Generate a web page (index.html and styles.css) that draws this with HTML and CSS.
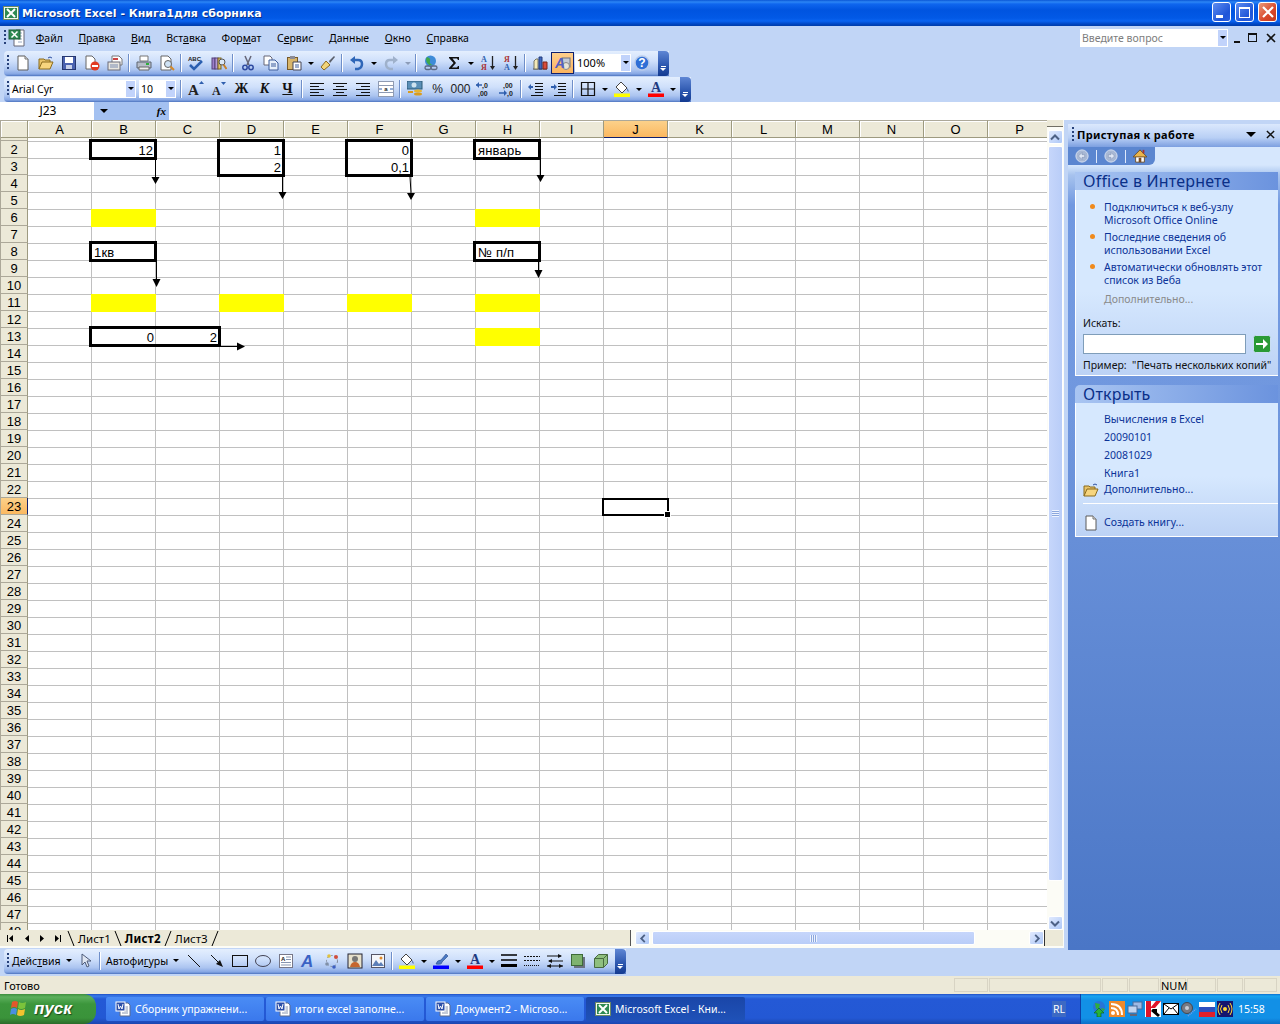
FILE: index.html
```html
<!DOCTYPE html>
<html lang="ru">
<head>
    <meta charset="UTF-8">
    <title>Microsoft Excel - Книга1для сборника</title>
    <link rel="stylesheet" href="styles.css">
</head>
<body>
    <svg class="defs" width="0" height="0">
        <symbol id="i-new" viewBox="0 0 16 16"><path d="M3 1h7l3 3v11H3z" fill="#fff" stroke="#5a5a5a"/><path d="M10 1v3h3" fill="#ddd" stroke="#777"/></symbol>
        <symbol id="i-open" viewBox="0 0 16 16"><path d="M1 14V4h5l1 1h5v2" fill="#e9c46a" stroke="#8a6a1c"/><path d="M1 14l3-7h11l-3 7z" fill="#f7d57e" stroke="#8a6a1c"/><path d="M10 3q2-2 4 0" fill="none" stroke="#2b4fa0"/></symbol>
        <symbol id="i-save" viewBox="0 0 16 16"><rect x="1.500" y="1.500" width="13" height="13" fill="#4a62b0" stroke="#26376f"/><rect x="4" y="2" width="8" height="6" fill="#fff"/><rect x="5" y="10" width="6" height="4" fill="#c9d2ea"/></symbol>
        <symbol id="i-perm" viewBox="0 0 16 16"><path d="M2 1h6l3 3v10H2z" fill="#fff" stroke="#666"/><circle cx="11" cy="11" r="4.500" fill="#e23a22"/><rect x="8" y="10" width="6" height="2" fill="#fff"/></symbol>
        <symbol id="i-mail" viewBox="0 0 16 16"><path d="M5 1h7l3 3v6H5z" fill="#fff" stroke="#777"/><rect x="1" y="7" width="12" height="8" fill="#e8e6e0" stroke="#6b6b78"/><path d="M3 10h8M3 12h8" stroke="#7a8bb0"/><rect x="6" y="3" width="5" height="2" fill="#c44"/></symbol>
        <symbol id="i-print" viewBox="0 0 16 16"><path d="M4 1h8v5H4z" fill="#fff" stroke="#777"/><path d="M1 7h14v6H1z" fill="#b7bdc9" stroke="#5d6470"/><path d="M3 12h10v3H3z" fill="#eee" stroke="#666"/><rect x="10" y="8" width="3" height="2" fill="#2fae3c"/></symbol>
        <symbol id="i-preview" viewBox="0 0 16 16"><path d="M2 1h7l3 3v11H2z" fill="#fff" stroke="#666"/><circle cx="9" cy="9" r="3.500" fill="#cfe2f5" stroke="#666"/><path d="M11.500 11.500l3.500 3.500" stroke="#d58a2a" stroke-width="2"/></symbol>
        <symbol id="i-research" viewBox="0 0 16 16"><rect x="1" y="3" width="3" height="11" fill="#9c7fc9" stroke="#54407a"/><rect x="4" y="3" width="3" height="11" fill="#b49ad8" stroke="#54407a"/><rect x="7" y="3" width="3" height="11" fill="#e0c36a" stroke="#7a6420"/><circle cx="11" cy="7" r="3" fill="#dbe8f6" stroke="#555"/><path d="M12.500 9.500l3 4.500" stroke="#c98228" stroke-width="2"/></symbol>
        <symbol id="i-cut" viewBox="0 0 16 16"><path d="M5 1l4 9M11 1l-4 9" stroke="#667" stroke-width="1.500"/><circle cx="5" cy="12.500" r="2.200" fill="none" stroke="#2e4aa0" stroke-width="1.500"/><circle cx="11" cy="12.500" r="2.200" fill="none" stroke="#2e4aa0" stroke-width="1.500"/></symbol>
        <symbol id="i-copy" viewBox="0 0 16 16"><path d="M1 1h6l2 2v7H1z" fill="#fff" stroke="#667"/><path d="M6 5h6l3 3v7H6z" fill="#e7f0fb" stroke="#3c5c9c"/><path d="M8 9h5M8 11h5" stroke="#3c5c9c"/></symbol>
        <symbol id="i-paste" viewBox="0 0 16 16"><rect x="1.500" y="2.500" width="10" height="12" fill="#d8b56a" stroke="#76592a"/><rect x="4" y="1" width="5" height="3" fill="#8b8b96"/><path d="M7 7h8v8H7z" fill="#fff" stroke="#445"/><path d="M9 10h4M9 12h4" stroke="#3c5c9c"/></symbol>
        <symbol id="i-brush" viewBox="0 0 16 16"><path d="M1 12l5-6 4 4-6 5z" fill="#f1d47a" stroke="#8b6a22"/><path d="M9 6l5-5 1 1-5 6z" fill="#5a5f6a"/></symbol>
        <symbol id="i-undo" viewBox="0 0 16 16"><path d="M4 5h5q4 0 4 4t-4 5H6" fill="none" stroke="#2e66b8" stroke-width="2.500"/><path d="M6 1v8L1 5z" fill="#2e66b8"/></symbol>
        <symbol id="i-redo" viewBox="0 0 16 16"><path d="M12 5H7q-4 0-4 4t4 5h3" fill="none" stroke="#9fb1cb" stroke-width="2.500"/><path d="M10 1v8l5-4z" fill="#9fb1cb"/></symbol>
        <symbol id="i-link" viewBox="0 0 16 16"><circle cx="7.500" cy="6" r="5.500" fill="#3d8bd8"/><path d="M4 2q4 1 3 4t3 4q-3 1-5-1T3 4z" fill="#3fa84a"/><rect x="2" y="11" width="6" height="3.500" rx="1.700" fill="none" stroke="#5b6a86" stroke-width="1.300"/><rect x="8" y="11" width="6" height="3.500" rx="1.700" fill="none" stroke="#5b6a86" stroke-width="1.300"/></symbol>
        <symbol id="i-sigma" viewBox="0 0 16 16"><path d="M3 2h10v3h-1l-1-1.500H6.500L10 8l-4 4.500h5L12 11h1v3H3v-1l4.500-5L3 3z" fill="#111"/></symbol>
        <symbol id="i-chart" viewBox="0 0 16 16"><path d="M1 14h14" stroke="#444"/><path d="M2 6l2-2h2v10H2z" fill="#f4e9b8" stroke="#776"/><path d="M7 2h3v12H7z" fill="#3f68c0" stroke="#223a78"/><path d="M11 7h4v7h-4z" fill="#d84b3a" stroke="#7a2418"/></symbol>
        <symbol id="i-left" viewBox="0 0 16 16"><path d="M1 2.500h14M1 5.500h9M1 8.500h14M1 11.500h9M1 14.500h14" stroke="#111"/></symbol>
        <symbol id="i-center" viewBox="0 0 16 16"><path d="M1 2.500h14M4 5.500h8M1 8.500h14M4 11.500h8M1 14.500h14" stroke="#111"/></symbol>
        <symbol id="i-right" viewBox="0 0 16 16"><path d="M1 2.500h14M6 5.500h9M1 8.500h14M6 11.500h9M1 14.500h14" stroke="#111"/></symbol>
        <symbol id="i-money" viewBox="0 0 16 16"><rect x="0" y="0" width="15" height="8" fill="#5a8fb8" stroke="#2c5a78"/><circle cx="7" cy="4" r="2.500" fill="#cfe2ef"/><ellipse cx="11" cy="10" rx="4" ry="1.500" fill="#e9b530"/><ellipse cx="11" cy="13" rx="4" ry="1.500" fill="#d89c20"/><path d="M1 11h5" stroke="#d89c20" stroke-width="2"/></symbol>
        <symbol id="i-outdent" viewBox="0 0 16 16"><path d="M7 2.500h8M7 5.500h8M7 8.500h8M7 11.500h8M3 14.500h12" stroke="#111"/><path d="M5 6H2" stroke="#2f5fae" stroke-width="2"/><path d="M3 3L0 6l3 3z" fill="#2f5fae"/></symbol>
        <symbol id="i-indent" viewBox="0 0 16 16"><path d="M7 2.500h8M7 5.500h8M7 8.500h8M7 11.500h8M3 14.500h12" stroke="#111"/><path d="M0 6h3" stroke="#2f5fae" stroke-width="2"/><path d="M3 3l3 3-3 3z" fill="#2f5fae"/></symbol>
        <symbol id="i-borders" viewBox="0 0 16 16"><path d="M1.500 1.500h13v13h-13zM8 1.500v13M1.500 8h13" fill="none" stroke="#111" stroke-width="1.200"/></symbol>
        <symbol id="i-fill" viewBox="0 0 16 16"><path d="M2 6l5-5 6 6-5 5z" fill="#fff" stroke="#444"/><path d="M13 7q2 2 1.500 4-1.500-1-1.500-4z" fill="#3c5c9c"/><rect x="0" y="12.500" width="16" height="3.500" fill="#ff0"/></symbol>
        <symbol id="i-pen" viewBox="0 0 16 16"><path d="M3 11q1-4 5-4l5-6 2 2-6 6q0 3-6 2z" fill="#4a79c4" stroke="#2a4a88" stroke-width=".6"/><rect x="0" y="12.500" width="16" height="3.500" fill="#00f"/></symbol>
        <symbol id="i-cursor" viewBox="0 0 16 16"><path d="M4 1v11l3-3 2 5 2-1-2-5h4z" fill="#dfe6f2" stroke="#4d5b78"/></symbol>
        <symbol id="i-line" viewBox="0 0 16 16"><path d="M2 2l12 12" stroke="#111"/></symbol>
        <symbol id="i-arrow" viewBox="0 0 16 16"><path d="M2 2l8 8" stroke="#111"/><path d="M7 11l4-4 3 7z" fill="#111"/></symbol>
        <symbol id="i-rect" viewBox="0 0 16 16"><rect x=".5" y="2.500" width="15" height="11" fill="none" stroke="#111"/></symbol>
        <symbol id="i-oval" viewBox="0 0 16 16"><ellipse cx="8" cy="8" rx="7.500" ry="5.500" fill="none" stroke="#445"/></symbol>
        <symbol id="i-diagram" viewBox="0 0 16 16"><circle cx="8" cy="8" r="5.500" fill="none" stroke="#7f8796" stroke-dasharray="2 2"/><circle cx="12" cy="4" r="2" fill="#d14d3a"/><circle cx="5" cy="3" r="1.800" fill="#e0c13e"/><circle cx="3" cy="11" r="1.800" fill="#8090a8"/><circle cx="10" cy="14" r="1.800" fill="#3d5fc0"/></symbol>
        <symbol id="i-clip" viewBox="0 0 16 16"><rect x="1" y="1" width="14" height="14" fill="#e7e1cc" stroke="#223"/><circle cx="8" cy="6" r="3" fill="#777"/><path d="M3 14q1-5 5-5t5 5z" fill="#c5662e"/></symbol>
        <symbol id="i-pic" viewBox="0 0 16 16"><rect x="1.500" y="1.500" width="13" height="13" fill="#f4f6fa" stroke="#556"/><path d="M2 13l4-6 3 4 2-2 3 4z" fill="#5d7fb8"/><circle cx="11" cy="5" r="1.500" fill="#e08a2a"/></symbol>
        <symbol id="i-lstyle" viewBox="0 0 16 16"><path d="M0 2h16M0 7h16" stroke="#000" stroke-width="1.500"/><path d="M0 12.500h16" stroke="#000" stroke-width="3"/></symbol>
        <symbol id="i-dash" viewBox="0 0 16 16"><path d="M0 3.500h16M0 7.500h16" stroke="#111" stroke-dasharray="2 1"/><path d="M0 12.500h16" stroke="#111" stroke-dasharray="1 1"/></symbol>
        <symbol id="i-arrows" viewBox="0 0 16 16"><path d="M0 3h14M2 8h14M0 13h16" stroke="#111"/><path d="M11 1l4 2-4 2zM5 6L1 8l4 2zM4 11l-4 2 4 2zM12 11l4 2-4 2z" fill="#111"/></symbol>
        <symbol id="i-shadow" viewBox="0 0 16 16"><rect x="4" y="4" width="11" height="11" fill="#6b7280"/><rect x="1.500" y="1.500" width="11" height="11" fill="#7fb36f" stroke="#3e6a38"/></symbol>
        <symbol id="i-cube" viewBox="0 0 16 16"><path d="M1.500 5.500l4-4h9v9l-4 4h-9z" fill="#8fbf7f" stroke="#486b40"/><path d="M1.500 5.500h9v9M10.500 5.500l4-4" fill="none" stroke="#486b40"/></symbol>
        <symbol id="i-xl" viewBox="0 0 16 16"><rect x=".5" y="1.500" width="15" height="13" fill="#f4f7ee" stroke="#6d8a66"/><rect x="2" y="3" width="12" height="10" fill="#2e8a52"/><path d="M4 4l8 8M12 4l-8 8" stroke="#fff" stroke-width="2"/></symbol>
        <symbol id="i-xldoc" viewBox="0 0 18 18"><path d="M8 1h8v16H6V8" fill="#fff" stroke="#667"/><path d="M10 4h4M10 7h4M10 10h4M10 13h4" stroke="#9aa9c2"/><rect x="1" y="1" width="11" height="9" fill="#2e8a52" stroke="#1d5c36"/><path d="M3.500 2.500l6 6M9.500 2.500l-6 6" stroke="#fff" stroke-width="1.500"/></symbol>
        <symbol id="i-word" viewBox="0 0 16 16"><path d="M5 2h8l2 2v11H5z" fill="#fff" stroke="#5d6b8c"/><path d="M9 6h4M9 8h4M9 10h4M7 12h6" stroke="#8795b0"/><rect x="1" y="1" width="9" height="9" fill="#2c4fa8" stroke="#fff"/><path d="M3 3l1 5 1.500-3L7 8l1-5" fill="none" stroke="#fff"/></symbol>
        <symbol id="i-back" viewBox="0 0 16 16"><circle cx="8" cy="8" r="7" fill="#a8b8d4" stroke="#dfe7f5"/><path d="M11 6.500H8V4L4 8l4 4V9.500h3z" fill="#dfe7f5" stroke="#7c8db0" stroke-width=".6"/></symbol>
        <symbol id="i-forward" viewBox="0 0 16 16"><circle cx="8" cy="8" r="7" fill="#a8b8d4" stroke="#dfe7f5"/><path d="M5 6.500h3V4l4 4-4 4V9.500H5z" fill="#dfe7f5" stroke="#7c8db0" stroke-width=".6"/></symbol>
        <symbol id="i-home" viewBox="0 0 16 16"><path d="M3 8v7h10V8z" fill="#fff" stroke="#6b4a20"/><path d="M0 9l8-8 8 8z" fill="#e9b44c" stroke="#6b4a20"/><rect x="6.500" y="10" width="3" height="5" fill="#7a4a20"/><rect x="11" y="1" width="2" height="4" fill="#a33"/></symbol>
        <symbol id="i-go" viewBox="0 0 18 18"><rect x=".5" y=".5" width="17" height="17" rx="2" fill="#2a9a35" stroke="#c9ddf2"/><path d="M3 8h7V4l5 5-5 5v-4H3z" fill="#fff"/></symbol>
        <symbol id="t-globe" viewBox="0 0 16 16"><circle cx="8" cy="6" r="6" fill="#2874d8"/><path d="M4 2l5 1-1 4-3 1zM10 7l4 1-2 3z" fill="#2fae3c"/><path d="M8 7l5 5h-3v4H6v-4H3z" fill="#27b33a" stroke="#0a5c17" stroke-width=".6"/></symbol>
        <symbol id="t-rss" viewBox="0 0 16 16"><rect width="16" height="16" fill="#ee8a2c"/><circle cx="4" cy="12" r="2" fill="#fff"/><path d="M2 7q7 0 7 7M2 3q11 0 11 11" fill="none" stroke="#fff" stroke-width="2"/></symbol>
        <symbol id="t-net" viewBox="0 0 16 16"><rect x="6" y="1" width="9" height="7" fill="#9db9e4" stroke="#4a6a9a"/><rect x="1" y="5" width="9" height="7" fill="#c2d4ef" stroke="#4a6a9a"/><path d="M3 14h7" stroke="#667" stroke-width="2"/></symbol>
        <symbol id="t-kav" viewBox="0 0 16 16"><rect width="16" height="16" fill="#fff"/><path d="M1 0h5v6l5-6h5L10 7H6v9H1z" fill="#e0152a"/><path d="M8 8l7 6-2 2-7-6z" fill="#000"/><path d="M7 8h5v5z" fill="#000"/></symbol>
        <symbol id="t-mail" viewBox="0 0 16 16"><rect x=".5" y="2.500" width="15" height="11" fill="#fff" stroke="#000"/><path d="M1 3l7 5 7-5M1 13l5-6M15 13l-5-6" fill="none" stroke="#000"/></symbol>
        <symbol id="t-sound" viewBox="0 0 16 16"><circle cx="6" cy="7" r="5.500" fill="#767a84" stroke="#44474f"/><circle cx="6" cy="7" r="2" fill="#c8ccd4"/><path d="M7 15l8-7" stroke="#7d9be0" stroke-dasharray="1 1" stroke-width="1.500"/></symbol>
        <symbol id="t-flag" viewBox="0 0 16 16"><rect y="1" width="16" height="5" fill="#fff"/><rect y="6" width="16" height="5" fill="#2c4fbf"/><rect y="11" width="16" height="5" fill="#e0202a"/></symbol>
        <symbol id="t-wave" viewBox="0 0 16 16"><rect width="16" height="16" fill="#14146e"/><circle cx="8" cy="8" r="2" fill="#ffd93a"/><path d="M5 4q-3 4 0 8M11 4q3 4 0 8M3 2q-4 6 0 12M13 2q4 6 0 12" fill="none" stroke="#ffd93a"/></symbol>
        <symbol id="i-winlogo" viewBox="0 0 20 20"><path d="M3 3q3-2 6 0l-1 6q-3-2-6 0z" fill="#e2572c"/><path d="M10 3q3 2 7 0l-1 6q-4 2-7 0z" fill="#7bc33b"/><path d="M2 10q3-2 6 0l-1 6q-3-2-6 0z" fill="#4a8fe0"/><path d="M9 10q3 2 7 0l-1 6q-4 2-7 0z" fill="#f1c22f"/></symbol>
    </svg>

    <div class="window">
        <header class="titlebar">
            <svg class="title-icon"><use href="#i-xl"/></svg>
            <span class="title-text">Microsoft Excel - Книга1для сборника</span>
            <div class="title-buttons">
                <span class="win-btn"><i class="glyph-min"></i></span>
                <span class="win-btn"><i class="glyph-restore"></i></span>
                <span class="win-btn win-close"><svg class="glyph-close" viewBox="0 0 12 12"><path d="M1 1l10 10M11 1L1 11" stroke="#fff" stroke-width="2.200"/></svg></span>
            </div>
        </header>

        <nav class="menubar">
            <i class="grip grip-menu"></i>
            <svg class="doc-icon"><use href="#i-xldoc"/></svg>
            <span class="menu-item"><u>Ф</u>айл</span>
            <span class="menu-item"><u>П</u>равка</span>
            <span class="menu-item"><u>В</u>ид</span>
            <span class="menu-item">Вст<u>а</u>вка</span>
            <span class="menu-item">Фор<u>м</u>ат</span>
            <span class="menu-item">С<u>е</u>рвис</span>
            <span class="menu-item"><u>Д</u>анные</span>
            <span class="menu-item"><u>О</u>кно</span>
            <span class="menu-item"><u>С</u>правка</span>
            <div class="menu-right">
                <div class="combo help-combo"><span class="combo-text">Введите вопрос</span><span class="combo-arrow"></span></div>
                <i class="glyph-min dark"></i>
                <i class="glyph-restore dark"></i>
                <svg class="glyph-close-doc" viewBox="0 0 10 10"><path d="M1 1l8 8M9 1L1 9" stroke="#111" stroke-width="1.600"/></svg>
            </div>
        </nav>

        <div class="dock-row">
            <div class="toolbar toolbar-std">
                <i class="grip"></i>
                <span class="btn"><svg><use href="#i-new"/></svg></span>
                <span class="btn"><svg><use href="#i-open"/></svg></span>
                <span class="btn"><svg><use href="#i-save"/></svg></span>
                <span class="btn"><svg><use href="#i-perm"/></svg></span>
                <span class="btn"><svg><use href="#i-mail"/></svg></span>
                <i class="sep"></i>
                <span class="btn"><svg><use href="#i-print"/></svg></span>
                <span class="btn"><svg><use href="#i-preview"/></svg></span>
                <i class="sep"></i>
                <span class="btn"><svg viewBox="0 0 16 16"><text x="0" y="6" class="tiny-b">ABC</text><path d="M2 10l4 4 8-8" fill="none" stroke="#2b5fb0" stroke-width="2.500"/></svg></span>
                <span class="btn"><svg><use href="#i-research"/></svg></span>
                <i class="sep"></i>
                <span class="btn"><svg><use href="#i-cut"/></svg></span>
                <span class="btn"><svg><use href="#i-copy"/></svg></span>
                <span class="btn"><svg><use href="#i-paste"/></svg></span>
                <i class="drop"></i>
                <span class="btn"><svg><use href="#i-brush"/></svg></span>
                <i class="sep"></i>
                <span class="btn"><svg><use href="#i-undo"/></svg></span>
                <i class="drop"></i>
                <span class="btn"><svg><use href="#i-redo"/></svg></span>
                <i class="drop off"></i>
                <i class="sep"></i>
                <span class="btn"><svg><use href="#i-link"/></svg></span>
                <span class="btn"><svg><use href="#i-sigma"/></svg></span>
                <i class="drop"></i>
                <span class="btn"><svg viewBox="0 0 16 16"><text x="1" y="7" class="tiny-a">A</text><text x="1" y="15" class="tiny-z">Я</text><path d="M12.500 1v12" stroke="#222" stroke-width="1.300"/><path d="M10 11h5l-2.500 4z" fill="#222"/></svg></span>
                <span class="btn"><svg viewBox="0 0 16 16"><text x="1" y="7" class="tiny-z">Я</text><text x="1" y="15" class="tiny-a">A</text><path d="M12.500 1v12" stroke="#222" stroke-width="1.300"/><path d="M10 11h5l-2.500 4z" fill="#222"/></svg></span>
                <i class="sep"></i>
                <span class="btn"><svg><use href="#i-chart"/></svg></span>
                <span class="btn active"><svg viewBox="0 0 16 16"><rect x="7" y="3" width="8" height="9" fill="#c6cbd6" stroke="#6a7080"/><circle cx="11" cy="11" r="3.500" fill="#e8e4d8" stroke="#888"/><text x="0" y="13" class="tiny-draw">A</text></svg></span>
                <div class="combo zoom-combo"><span class="combo-text">100%</span><span class="combo-arrow"></span></div>
                <span class="btn"><svg viewBox="0 0 16 16"><circle cx="8" cy="8" r="7" fill="#2f6fd6" stroke="#b9cbea" stroke-width="1.500"/><text x="8" y="12" text-anchor="middle" class="tiny-help">?</text></svg></span>
                <span class="handle"></span>
            </div>
        </div>

        <div class="dock-row">
            <div class="toolbar toolbar-fmt">
                <i class="grip"></i>
                <div class="combo font-combo"><span class="combo-text">Arial Cyr</span><span class="combo-arrow"></span></div>
                <div class="combo size-combo"><span class="combo-text">10</span><span class="combo-arrow"></span></div>
                <i class="sep"></i>
                <span class="btn"><svg viewBox="0 0 16 16"><text x="0" y="14" class="serif-lg">A</text><path d="M11 3l2.500-3L16 3z" fill="#2f5fae"/></svg></span>
                <span class="btn"><svg viewBox="0 0 16 16"><text x="1" y="14" class="serif-sm">A</text><path d="M10 1l2.500 3L15 1z" fill="#2f5fae"/></svg></span>
                <span class="btn fmt-letter">Ж</span>
                <span class="btn fmt-letter fmt-italic">К</span>
                <span class="btn fmt-letter fmt-under">Ч</span>
                <i class="sep"></i>
                <span class="btn"><svg><use href="#i-left"/></svg></span>
                <span class="btn"><svg><use href="#i-center"/></svg></span>
                <span class="btn"><svg><use href="#i-right"/></svg></span>
                <span class="btn"><svg viewBox="0 0 16 16"><rect x=".5" y=".5" width="15" height="15" fill="#fff" stroke="#8f9bb3"/><path d="M0 4.500h16M0 11.500h16" stroke="#8f9bb3"/><text x="8" y="10" text-anchor="middle" class="tiny-b">a</text><path d="M1 8h3M12 8h3" stroke="#2b5fb0"/></svg></span>
                <i class="sep"></i>
                <span class="btn"><svg><use href="#i-money"/></svg></span>
                <span class="btn fmt-plain">%</span>
                <span class="btn fmt-plain">000</span>
                <span class="btn"><svg viewBox="0 0 16 16"><text x="6" y="7" class="tiny-num">,0</text><text x="2" y="15" class="tiny-num">,00</text><path d="M0 4h6" stroke="#2f5fae" stroke-width="1.500"/><path d="M3 1L0 4l3 3z" fill="#2f5fae"/></svg></span>
                <span class="btn"><svg viewBox="0 0 16 16"><text x="4" y="7" class="tiny-num">,00</text><text x="8" y="15" class="tiny-num">,0</text><path d="M0 12h6" stroke="#2f5fae" stroke-width="1.500"/><path d="M5 9l3 3-3 3z" fill="#2f5fae"/></svg></span>
                <i class="sep"></i>
                <span class="btn"><svg><use href="#i-outdent"/></svg></span>
                <span class="btn"><svg><use href="#i-indent"/></svg></span>
                <i class="sep"></i>
                <span class="btn"><svg><use href="#i-borders"/></svg></span>
                <i class="drop"></i>
                <span class="btn"><svg><use href="#i-fill"/></svg></span>
                <i class="drop"></i>
                <span class="btn"><svg viewBox="0 0 16 16"><text x="8" y="11" text-anchor="middle" class="serif-color">A</text><rect x="0" y="12.500" width="16" height="3.500" fill="#f00"/></svg></span>
                <i class="drop"></i>
                <span class="handle handle-fmt"></span>
            </div>
        </div>

        <div class="formula-bar">
            <span class="name-box">J23</span>
            <span class="name-arrow"><i class="tri"></i><em class="fx">fx</em></span>
        </div>

        <div class="work">
            <section class="sheet-wrap">
                <div class="sheet-top">
                    <div class="grid">
                        <div class="col-head corner"></div>
                        <div class="col-head">A</div><div class="col-head">B</div><div class="col-head">C</div><div class="col-head">D</div>
                        <div class="col-head">E</div><div class="col-head">F</div><div class="col-head">G</div><div class="col-head">H</div>
                        <div class="col-head">I</div><div class="col-head current">J</div><div class="col-head">K</div><div class="col-head">L</div>
                        <div class="col-head">M</div><div class="col-head">N</div><div class="col-head">O</div><div class="col-head">P</div>

                        <div class="row-head"></div>
                        <div class="row-head">2</div><div class="row-head">3</div><div class="row-head">4</div><div class="row-head">5</div>
                        <div class="row-head">6</div><div class="row-head">7</div><div class="row-head">8</div><div class="row-head">9</div>
                        <div class="row-head">10</div><div class="row-head">11</div><div class="row-head">12</div><div class="row-head">13</div>
                        <div class="row-head">14</div><div class="row-head">15</div><div class="row-head">16</div><div class="row-head">17</div>
                        <div class="row-head">18</div><div class="row-head">19</div><div class="row-head">20</div><div class="row-head">21</div>
                        <div class="row-head">22</div><div class="row-head current">23</div><div class="row-head">24</div><div class="row-head">25</div>
                        <div class="row-head">26</div><div class="row-head">27</div><div class="row-head">28</div><div class="row-head">29</div>
                        <div class="row-head">30</div><div class="row-head">31</div><div class="row-head">32</div><div class="row-head">33</div>
                        <div class="row-head">34</div><div class="row-head">35</div><div class="row-head">36</div><div class="row-head">37</div>
                        <div class="row-head">38</div><div class="row-head">39</div><div class="row-head">40</div><div class="row-head">41</div>
                        <div class="row-head">42</div><div class="row-head">43</div><div class="row-head">44</div><div class="row-head">45</div>
                        <div class="row-head">46</div><div class="row-head">47</div><div class="row-head">48</div>

                        <div class="yellow col-b row-6"></div>
                        <div class="yellow col-h row-6"></div>
                        <div class="yellow col-b row-11"></div>
                        <div class="yellow col-d row-11"></div>
                        <div class="yellow col-f row-11"></div>
                        <div class="yellow col-h row-11"></div>
                        <div class="yellow col-h row-13"></div>

                        <div class="box col-b row-2"><span class="val">12</span></div>
                        <div class="box col-d row-2-3"><span class="val">1</span><span class="val">2</span></div>
                        <div class="box col-f row-2-3"><span class="val">0</span><span class="val">0,1</span></div>
                        <div class="box col-h row-2"><span class="val txt">январь</span></div>
                        <div class="box col-b row-8"><span class="val txt">1кв</span></div>
                        <div class="box col-h row-8"><span class="val txt">№ п/п</span></div>
                        <div class="box col-b-c row-13"><span class="val half">0</span><span class="val half">2</span></div>

                        <div class="selected col-j row-23"></div>

                        <svg class="arrows" viewBox="0 120 1047 810" width="1047" height="810">
                            <path d="M155.500 160v17M282.500 177v15M410 177l1 16M540.500 160v15M156.500 262v17M538.500 262v9M221 346.500h17" stroke="#000" fill="none"/>
                            <path d="M151.500 177h8l-4 7zM278.500 192h8l-4 7zM407 193h8l-4 7zM536.500 175h8l-4 7zM152.500 279h8l-4 8zM534.500 270h8l-4 8zM237 342.500v8l8-4z" fill="#000"/>
                        </svg>
                    </div>

                    <div class="vscroll">
                        <div class="split-v"></div>
                        <span class="sbtn"><svg viewBox="0 0 10 8"><path d="M1 6l4-4 4 4" fill="none" stroke="#4d6185" stroke-width="2"/></svg></span>
                        <div class="vthumb"><i class="thumb-grip-v"></i></div>
                        <div class="vtrack"></div>
                        <span class="sbtn"><svg viewBox="0 0 10 8"><path d="M1 2l4 4 4-4" fill="none" stroke="#4d6185" stroke-width="2"/></svg></span>
                    </div>
                </div>

                <div class="sheet-bottom">
                    <div class="tab-nav">
                        <svg viewBox="0 0 66 15" width="66" height="15"><path d="M6 4h1v7H6zM12 4v7l-4-3.500zM28 4v7l-4-3.500zM39 4v7l4-3.500zM54 4v7l4-3.500zM59 4h1v7h-1z" fill="#000"/></svg>
                    </div>
                    <div class="tabs">
                        <svg class="slash" viewBox="0 0 8 15"><path d="M1 0l6 15" stroke="#000"/></svg>
                        <span class="tab">Лист1</span>
                        <svg class="slash" viewBox="0 0 8 15"><path d="M1 0l6 15" stroke="#000"/></svg>
                        <span class="tab tab-active">Лист2</span>
                        <svg class="slash" viewBox="0 0 8 15"><path d="M7 0L1 15" stroke="#000"/></svg>
                        <span class="tab">Лист3</span>
                        <svg class="slash" viewBox="0 0 8 15"><path d="M7 0L1 15" stroke="#000"/></svg>
                    </div>
                    <div class="hscroll">
                        <span class="sbtn"><svg viewBox="0 0 8 10"><path d="M6 1L2 5l4 4" fill="none" stroke="#4d6185" stroke-width="2"/></svg></span>
                        <div class="hthumb"><i class="thumb-grip-h"></i></div>
                        <div class="htrack"></div>
                        <span class="sbtn"><svg viewBox="0 0 8 10"><path d="M2 1l4 4-4 4" fill="none" stroke="#4d6185" stroke-width="2"/></svg></span>
                    </div>
                    <div class="corner-box"></div>
                </div>
            </section>

            <aside class="pane">
                <div class="pane-title">
                    <i class="grip grip-pane"></i>
                    <span class="pane-name">Приступая к работе</span>
                    <i class="tri tri-big"></i>
                    <svg class="pane-close" viewBox="0 0 10 10"><path d="M1 1l8 8M9 1L1 9" stroke="#111" stroke-width="1.600"/></svg>
                </div>
                <div class="pane-nav">
                    <div class="pane-nav-tools">
                        <svg><use href="#i-back"/></svg>
                        <i class="nav-sep"></i>
                        <svg><use href="#i-forward"/></svg>
                        <i class="nav-sep"></i>
                        <svg><use href="#i-home"/></svg>
                    </div>
                </div>
                <div class="pane-content">
                    <div class="sect-head">Office в Интернете</div>
                    <div class="sect-body sect-online">
                        <a class="bullet">Подключиться к веб-узлу<br>Microsoft Office Online</a>
                        <a class="bullet">Последние сведения об<br>использовании Excel</a>
                        <a class="bullet">Автоматически обновлять этот<br>список из Веба</a>
                        <a class="more">Дополнительно...</a>
                        <label class="search-label">Искать:</label>
                        <div class="search-row">
                            <span class="search-input"></span>
                            <svg class="go-btn"><use href="#i-go"/></svg>
                        </div>
                        <p class="example">Пример:&nbsp; "Печать нескольких копий"</p>
                    </div>

                    <div class="sect-head sect-open">Открыть</div>
                    <div class="sect-body sect-files">
                        <a class="file">Вычисления в Excel</a>
                        <a class="file">20090101</a>
                        <a class="file">20081029</a>
                        <a class="file file-last">Книга1</a>
                        <a class="file file-more"><svg class="file-icon"><use href="#i-open"/></svg>Дополнительно...</a>
                        <hr class="sect-rule">
                        <a class="file file-new"><svg class="file-icon"><use href="#i-new"/></svg>Создать книгу...</a>
                    </div>
                </div>
            </aside>
        </div>

        <div class="dock-row dock-draw">
            <div class="toolbar toolbar-draw">
                <i class="grip"></i>
                <span class="text-btn btn-actions"><span>Дейс<u>т</u>вия</span><i class="tri"></i></span>
                <span class="btn"><svg><use href="#i-cursor"/></svg></span>
                <i class="sep"></i>
                <span class="text-btn btn-shapes"><span>Автофи<u>г</u>уры</span><i class="tri"></i></span>
                <span class="btn"><svg><use href="#i-line"/></svg></span>
                <span class="btn"><svg><use href="#i-arrow"/></svg></span>
                <span class="btn"><svg><use href="#i-rect"/></svg></span>
                <span class="btn"><svg><use href="#i-oval"/></svg></span>
                <span class="btn"><svg viewBox="0 0 16 16"><rect x="1.500" y="1.500" width="13" height="13" fill="#fff" stroke="#778"/><text x="3" y="8" class="tiny-b">A</text><path d="M8 4h5M8 6.500h5M3 9.500h10M3 12h10" stroke="#8795b0"/></svg></span>
                <span class="btn"><svg viewBox="0 0 16 16"><text x="0" y="14" class="wordart">A</text></svg></span>
                <span class="btn"><svg><use href="#i-diagram"/></svg></span>
                <span class="btn"><svg><use href="#i-clip"/></svg></span>
                <span class="btn"><svg><use href="#i-pic"/></svg></span>
                <i class="sep"></i>
                <span class="btn"><svg><use href="#i-fill"/></svg></span>
                <i class="drop"></i>
                <span class="btn"><svg><use href="#i-pen"/></svg></span>
                <i class="drop"></i>
                <span class="btn"><svg viewBox="0 0 16 16"><text x="8" y="11" text-anchor="middle" class="serif-color">A</text><rect x="0" y="12.500" width="16" height="3.500" fill="#f00"/></svg></span>
                <i class="drop"></i>
                <span class="btn"><svg><use href="#i-lstyle"/></svg></span>
                <span class="btn"><svg><use href="#i-dash"/></svg></span>
                <span class="btn"><svg><use href="#i-arrows"/></svg></span>
                <span class="btn"><svg><use href="#i-shadow"/></svg></span>
                <span class="btn"><svg><use href="#i-cube"/></svg></span>
                <span class="handle"></span>
            </div>
        </div>

        <footer class="statusbar">
            <span class="status-text">Готово</span>
            <span class="panel p34"></span>
            <span class="panel p112"></span>
            <span class="panel p26"></span>
            <span class="panel p30"></span>
            <span class="panel p26">NUM</span>
            <span class="panel p29"></span>
            <span class="panel p26"></span>
            <span class="panel p33"></span>
        </footer>

        <div class="taskbar">
            <div class="start"><svg><use href="#i-winlogo"/></svg><span>пуск</span></div>
            <div class="task-list">
                <div class="task"><svg><use href="#i-word"/></svg><span>Сборник упражнени...</span></div>
                <div class="task"><svg><use href="#i-word"/></svg><span>итоги excel заполне...</span></div>
                <div class="task"><svg><use href="#i-word"/></svg><span>Документ2 - Microso...</span></div>
                <div class="task task-active"><svg><use href="#i-xl"/></svg><span>Microsoft Excel - Кни...</span></div>
            </div>
            <span class="lang">RL</span>
            <div class="tray">
                <svg><use href="#t-globe"/></svg>
                <svg><use href="#t-rss"/></svg>
                <svg><use href="#t-net"/></svg>
                <svg><use href="#t-kav"/></svg>
                <svg><use href="#t-mail"/></svg>
                <svg><use href="#t-sound"/></svg>
                <svg><use href="#t-flag"/></svg>
                <svg><use href="#t-wave"/></svg>
                <span class="clock">15:58</span>
            </div>
        </div>
    </div>
</body>
</html>
```

FILE: styles.css
```css
* {
    box-sizing: border-box;
}

html, body {
    margin: 0;
    padding: 0;
    width: 1280px;
    height: 1024px;
    overflow: hidden;
}

body {
    font-family: "Noto Sans", "DejaVu Sans", sans-serif;
    font-size: 10.500px;
    color: #000;
    background-color: #c1d5f6;
}

i, em {
    display: block;
    font-style: normal;
}

.defs {
    position: absolute;
}

.window {
    display: flex;
    flex-direction: column;
    height: 1024px;
}

/* svg text inside the icons */
.tiny-b { font: bold 6px "Liberation Sans", sans-serif; fill: #222; }
.tiny-a { font: bold 8px "Liberation Serif", serif; fill: #2f5fae; }
.tiny-z { font: bold 8px "Liberation Serif", serif; fill: #a33; }
.tiny-num { font: bold 7px "Liberation Sans", sans-serif; fill: #222; }
.tiny-draw { font: italic bold 14px "Liberation Sans", sans-serif; fill: #5560c0; }
.tiny-help { font: bold 12px "Liberation Sans", sans-serif; fill: #fff; }
.serif-lg { font: bold 15px "Liberation Serif", serif; fill: #222; }
.serif-sm { font: bold 12px "Liberation Serif", serif; fill: #222; }
.serif-color { font: bold 14px "Liberation Serif", serif; fill: #1f3a80; }
.wordart { font: italic bold 17px "Liberation Sans", sans-serif; fill: #3a62c4; }

/* title bar */
.titlebar {
    height: 26px;
    display: flex;
    align-items: center;
    padding: 0 3px;
    background: linear-gradient(#0a57d6 0, #2c86f5 2px, #0f66ee 4px, #0054e0 10px, #0259e6 18px, #0a63f0 21px, #0046c4 24px, #003ca8 26px);
}

.title-icon {
    width: 16px;
    height: 16px;
    margin-right: 3px;
}

.title-text {
    color: #fff;
    font-family: "DejaVu Sans", sans-serif;
    font-weight: bold;
    font-size: 11px;
    text-shadow: 1px 1px 0 #0a2f86;
    flex: 1;
}

.title-buttons {
    display: flex;
    gap: 4px;
    margin-top: -2px;
}

.win-btn {
    width: 19px;
    height: 20px;
    border: 1px solid #fff;
    border-radius: 3px;
    background: linear-gradient(135deg, #5d8cf0, #1f55d8 70%, #2a5fe0);
    position: relative;
    display: flex;
    align-items: center;
    justify-content: center;
}

.win-close {
    background: linear-gradient(135deg, #eb9a7a, #d8472a 60%, #c43a1c);
}

.glyph-close {
    width: 12px;
    height: 12px;
}

.glyph-min {
    width: 7px;
    height: 3px;
    background-color: #fff;
    align-self: flex-end;
    margin: 0 4px 3px 0;
}

.glyph-restore {
    width: 11px;
    height: 11px;
    border: 1px solid #fff;
    border-top-width: 2px;
}

.glyph-min.dark {
    background-color: #111;
    width: 6px;
    height: 2px;
    margin: 0;
    align-self: center;
    position: relative;
    top: 4px;
}

.glyph-restore.dark {
    width: 9px;
    height: 9px;
    border-color: #111;
}

.glyph-close-doc {
    width: 10px;
    height: 10px;
}

/* menu */
.menubar {
    height: 25px;
    display: flex;
    align-items: center;
    padding: 0 0 2px 4px;
}

.grip {
    width: 2px;
    height: 16px;
    margin: 0 2px 0 3px;
    flex: none;
    background: repeating-linear-gradient(#27417a 0, #27417a 2px, transparent 2px, transparent 4px);
}

.grip-menu {
    margin: 0;
}

.doc-icon {
    width: 18px;
    height: 18px;
    margin: 0 2px 0 2px;
}

.menu-item {
    padding: 0 7.750px;
    white-space: nowrap;
}

.menu-right {
    margin-left: auto;
    display: flex;
    align-items: center;
}

.combo {
    display: flex;
    align-items: center;
    height: 18px;
    background-color: #fff;
    flex: none;
}

.combo-text {
    flex: 1;
    padding-left: 2px;
    white-space: nowrap;
}

.combo-arrow {
    width: 11px;
    height: 100%;
    background-color: #c1d3fb;
    position: relative;
    border: 1px solid #fff;
}

.combo-arrow::after {
    content: "";
    position: absolute;
    left: 2px;
    top: 6px;
    border: 3px solid transparent;
    border-top: 3px solid #000;
}

.help-combo {
    width: 148px;
    margin-right: 6px;
    color: #7d7d7d;
}

.menu-right .glyph-restore {
    margin: 0 9px 0 8px;
}

.menu-right .glyph-close-doc {
    margin-right: 4px;
}

/* toolbars */
.dock-row {
    height: 26px;
    padding-left: 4px;
    display: flex;
}

.dock-row + .dock-row {
    height: 25px;
}

.toolbar {
    display: flex;
    align-items: center;
    height: 25px;
    padding-bottom: 2px;
    position: relative;
    border-radius: 4px 0 0 4px;
    background: linear-gradient(#e4effe 0, #cfe0fb 40%, #abc4f0 75%, #85a6e4 92%, #4d74bf 100%);
}

.toolbar-std {
    width: 665px;
}

.toolbar-fmt {
    width: 687px;
}

.toolbar-draw {
    width: 622px;
}

.btn {
    width: 23px;
    height: 22px;
    flex: none;
    display: flex;
    align-items: center;
    justify-content: center;
}

.btn svg {
    width: 16px;
    height: 16px;
    overflow: visible;
}

.btn.active {
    background: linear-gradient(#ffcf8c, #fbb45f);
    border: 1px solid #10206e;
}

.sep {
    width: 6px;
    height: 18px;
    flex: none;
    background: linear-gradient(#6f8fc9, #6f8fc9) no-repeat 2px 0 / 1px 100%, linear-gradient(#fff, #fff) no-repeat 3px 0 / 1px 100%;
}

.drop {
    width: 11px;
    height: 22px;
    flex: none;
    position: relative;
}

.drop::after {
    content: "";
    position: absolute;
    left: 3px;
    top: 10px;
    border: 3px solid transparent;
    border-top: 3px solid #000;
}

.drop.off::after {
    border-top-color: #8c9cb8;
}

.zoom-combo {
    width: 56px;
    margin: 0 -1px 0 1px;
    font-size: 11px;
}

.font-combo {
    width: 126px;
    margin-left: -1px;
}

.size-combo {
    width: 37px;
    margin-left: 3px;
}

.toolbar-fmt .combo + .sep {
    margin-left: 2px;
}

.handle {
    position: absolute;
    right: 0;
    top: 0;
    bottom: 0;
    width: 11px;
    border-radius: 0 4px 4px 0;
    background: linear-gradient(#5f86d4, #2a55ad 60%, #133a90);
}

.handle::before {
    content: "";
    position: absolute;
    left: 3px;
    bottom: 9px;
    width: 5px;
    height: 1px;
    background-color: #fff;
}

.handle::after {
    content: "";
    position: absolute;
    left: 2px;
    bottom: 4px;
    border: 3px solid transparent;
    border-top: 3px solid #fff;
    border-bottom: 0;
    margin-bottom: 1px;
}

.fmt-letter {
    font: bold 14px "Liberation Serif", serif;
    color: #111;
}

.fmt-italic {
    font-style: italic;
}

.fmt-under {
    text-decoration: underline;
}

.fmt-plain {
    font-family: "Liberation Sans", sans-serif;
    font-size: 12px;
    color: #222;
}

.text-btn {
    display: flex;
    align-items: center;
    gap: 5px;
    flex: none;
    height: 22px;
    padding-left: 1px;
    white-space: nowrap;
}

.btn-actions {
    width: 63px;
}

.btn-shapes {
    width: 79px;
    padding-left: 3px;
}

.tri {
    width: 0;
    height: 0;
    border: 3px solid transparent;
    border-top: 3px solid #000;
    border-bottom: 0;
}

/* formula bar */
.formula-bar {
    height: 18px;
    background-color: #fff;
    display: flex;
    padding-left: 2px;
}

.name-box {
    width: 92px;
    text-align: center;
    font-size: 12px;
    line-height: 18px;
}

.name-arrow {
    width: 75px;
    background-color: #a4c1f1;
    display: flex;
    align-items: center;
    justify-content: space-between;
    padding: 0 3px 0 6px;
}

.name-arrow .tri {
    border-width: 4px;
    border-bottom: 0;
}

.fx {
    font: italic bold 11px "Liberation Serif", serif;
}

/* work area */
.work {
    height: 828px;
    display: flex;
}

.sheet-wrap {
    width: 1064px;
    background-color: #ece9d8;
    border-bottom: 2px solid #fcfcf6;
    border-right: 1px solid #fcfcf6;
    display: flex;
    flex-direction: column;
}

.sheet-top {
    height: 810px;
    display: flex;
}

/* gridlines are a repeating background, the filled cells sit on top */
.grid {
    position: relative;
    width: 1047px;
    height: 810px;
    overflow: hidden;
    border-left: 1px solid #aca899;
    display: grid;
    grid-template-columns: 27px repeat(16, 64px);
    grid-template-rows: 18px 3px repeat(48, 17px);
    background-color: #fff;
    background-image: linear-gradient(90deg, #c0c0c0 1px, transparent 1px), linear-gradient(#c0c0c0 1px, transparent 1px);
    background-size: 64px 100%, 100% 17px;
    background-position: 26px 0, 0 4px;
}

.col-head {
    background-color: #ece9d8;
    border-top: 1px solid #aca899;
    border-bottom: 1px solid #9d9a80;
    border-right: 1px solid #9d9a80;
    box-shadow: inset 1px 1px 0 #fff;
    text-align: center;
    font: 13px/17px "Liberation Sans", sans-serif;
    z-index: 2;
}

.col-head.current, .row-head.current {
    background: linear-gradient(#fcd18a, #fbb860);
    box-shadow: none;
    border-bottom-color: #10206e;
}

.row-head {
    grid-column: 1;
    background-color: #ece9d8;
    border-bottom: 1px solid #aca899;
    border-right: 1px solid #9d9a80;
    text-align: center;
    font: 13px/18px "Liberation Sans", sans-serif;
    overflow: hidden;
    z-index: 2;
}

.row-head.current {
    border-right-color: #10206e;
    border-bottom-color: #aca899;
}

.col-b { grid-column: 3; }
.col-d { grid-column: 5; }
.col-f { grid-column: 7; }
.col-h { grid-column: 9; }
.col-j { grid-column: 11; }
.col-b-c { grid-column: 3 / 5; }
.row-2 { grid-row: 3; }
.row-2-3 { grid-row: 3 / 5; }
.row-6 { grid-row: 7; }
.row-8 { grid-row: 9; }
.row-11 { grid-row: 12; }
.row-13 { grid-row: 14; }
.row-23 { grid-row: 24; }

.yellow {
    background-color: #ff0;
    margin: 0 0 -1px -1px;
}

.box {
    border: 3px solid #000;
    margin: -2px -1px -2px -3px;
    display: flex;
    flex-wrap: wrap;
    align-content: flex-start;
    font: 13px/17px "Liberation Sans", sans-serif;
    z-index: 1;
}

.val {
    width: 100%;
    text-align: right;
    padding-right: 1px;
    height: 17px;
    line-height: 17px;
}

.val.txt {
    text-align: left;
    padding-left: 2px;
    letter-spacing: .2px;
}

.val.half {
    width: 50%;
}

.selected {
    margin: 0 -1px -1px -2px;
    border: 2px solid #000;
    position: relative;
    z-index: 1;
}

.selected::after {
    content: "";
    position: absolute;
    right: -4px;
    bottom: -4px;
    width: 5px;
    height: 5px;
    background-color: #000;
    border: 1px solid #fff;
}

.arrows {
    position: absolute;
    left: -1px;
    top: 0;
    z-index: 3;
}

/* scroll bars */
.vscroll {
    width: 16px;
    height: 810px;
    display: flex;
    flex-direction: column;
    align-items: center;
    background-color: #fcfcf6;
}

.split-v {
    width: 100%;
    height: 7px;
    flex: none;
    background-color: #ece9d8;
    border-bottom: 1px solid #716f64;
    margin-bottom: 3px;
}

.sbtn {
    width: 15px;
    height: 14px;
    flex: none;
    display: flex;
    align-items: center;
    justify-content: center;
    border: 1px solid #fff;
    border-radius: 2px;
    background: linear-gradient(135deg, #e1eafe, #aec8f7);
}

.sbtn svg {
    width: 10px;
    height: 9px;
}

.vthumb {
    width: 15px;
    height: 735px;
    flex: none;
    margin-top: 2px;
    border: 1px solid #fff;
    border-radius: 2px;
    background: linear-gradient(90deg, #c6d6fb, #b9cdf8);
    display: flex;
    align-items: center;
    justify-content: center;
}

.thumb-grip-v {
    width: 7px;
    height: 7px;
    background: repeating-linear-gradient(#eef3fe 0, #eef3fe 1px, #8ca7dd 1px, #8ca7dd 2px);
}

.vtrack {
    flex: 1;
}

.sheet-bottom {
    height: 16px;
    display: flex;
    align-items: center;
    padding-left: 1px;
}

.tab-nav {
    width: 66px;
    flex: none;
    height: 15px;
}

.tabs {
    display: flex;
    align-items: center;
    width: 563px;
    height: 16px;
    flex: none;
    font-size: 11.500px;
}

.slash {
    width: 8px;
    height: 15px;
    flex: none;
}

.tab {
    padding: 0 3px;
    white-space: nowrap;
}

.tab-active {
    font-weight: bold;
    letter-spacing: .3px;
}

.hscroll {
    width: 414px;
    display: flex;
    align-items: center;
    height: 16px;
    padding-left: 4px;
    background-color: #fcfcf6;
    border-left: 1px solid #555;
    flex: none;
}

.hthumb {
    width: 323px;
    height: 14px;
    margin-left: 2px;
    flex: none;
    border: 1px solid #fff;
    border-radius: 2px;
    background: linear-gradient(#c6d6fb, #b9cdf8);
    display: flex;
    align-items: center;
    justify-content: center;
}

.thumb-grip-h {
    width: 7px;
    height: 7px;
    background: repeating-linear-gradient(90deg, #eef3fe 0, #eef3fe 1px, #8ca7dd 1px, #8ca7dd 2px);
}

.htrack {
    flex: 1;
}

.corner-box {
    flex: 1;
    height: 16px;
    border-left: 1px solid #333;
    background-color: #ece9d8;
}

/* task pane */
.pane {
    width: 212px;
    height: 826px;
    margin: 4px 0 0 4px;
    background: linear-gradient(#7ba2e7 0, #6f96dd 300px, #4a76c6 100%);
    display: flex;
    flex-direction: column;
}

.pane-title {
    height: 23px;
    flex: none;
    display: flex;
    align-items: center;
    padding: 0 5px 2px 2px;
    background: linear-gradient(#dbe8fd, #b8cff5 60%, #7c9fe0);
}

.grip-pane {
    margin: 0 3px 0 2px;
}

.pane-name {
    font-weight: bold;
    font-size: 11px;
    letter-spacing: .3px;
    flex: 1;
    white-space: nowrap;
}

.tri-big {
    border-width: 5px 5px 0 5px;
    margin-right: 10px;
}

.pane-close {
    width: 9px;
    height: 9px;
}

.pane-nav {
    height: 18px;
    flex: none;
    background-color: #d6e7fd;
}

.pane-nav-tools {
    width: 87px;
    height: 18px;
    display: flex;
    align-items: center;
    padding-left: 7px;
    border-radius: 0 0 6px 0;
    background-color: #5b86d0;
}

.pane-nav-tools svg {
    width: 14px;
    height: 14px;
    flex: none;
}

.nav-sep {
    width: 1px;
    height: 13px;
    margin: 0 7px;
    background-color: #dfe9fb;
}

.pane-content {
    flex: 1;
    padding: 7px 2px 0 7px;
    background: linear-gradient(#d6e7fd 0, #a7c3ee 10px, #7198e0 40px, transparent 300px);
}

.sect-head {
    height: 18px;
    padding-left: 8px;
    font-size: 16px;
    line-height: 18px;
    letter-spacing: .2px;
    color: #0a2f88;
    background: linear-gradient(90deg, #a9c5f2, #6b93de);
    white-space: nowrap;
}

.sect-body {
    border: 1px solid #fff;
    border-width: 0 0 1px 1px;
    background: linear-gradient(#d6e8fe 0, #d6e8fe 55%, #bcd2f5 100%);
    color: #0b3398;
    line-height: 13px;
}

.sect-online {
    height: 186px;
    padding: 11px 0 0 28px;
}

.sect-open {
    margin-top: 9px;
    border-radius: 5px 0 0 0;
}

.bullet {
    display: block;
    position: relative;
    margin-bottom: 4px;
    white-space: nowrap;
}

.bullet::before {
    content: "";
    position: absolute;
    left: -14px;
    top: 3px;
    width: 5px;
    height: 5px;
    border-radius: 50%;
    background-color: #f08a1c;
}

.more {
    display: block;
    margin-top: 6px;
    color: #8a8a8a;
}

.search-label {
    display: block;
    margin: 11px 0 4px -21px;
    color: #111;
}

.search-row {
    display: flex;
    align-items: center;
    margin-left: -21px;
}

.search-input {
    width: 163px;
    height: 20px;
    background-color: #fff;
    border: 1px solid #7f9db9;
}

.go-btn {
    width: 18px;
    height: 18px;
    margin-left: 7px;
}

.example {
    margin: 5px 0 0 -21px;
    color: #111;
    white-space: nowrap;
}

.sect-files {
    height: 134px;
    padding: 10px 0 0 28px;
}

.file {
    display: block;
    height: 18px;
    position: relative;
    white-space: nowrap;
}

.file-last {
    height: 16px;
}

.file-icon {
    position: absolute;
    left: -21px;
    top: -1px;
    width: 16px;
    height: 16px;
}

.sect-rule {
    border: 0;
    height: 1px;
    margin: 2px 0 12px -21px;
    background-color: #fff;
}

/* status bar */
.dock-draw {
    height: 28px !important;
    padding-top: 1px;
}

.statusbar {
    height: 18px;
    display: flex;
    align-items: center;
    gap: 1px;
    padding: 0 3px 0 4px;
    background-color: #ece9d8;
    font-size: 11px;
}

.status-text {
    flex: 1;
}

.panel {
    height: 14px;
    border: 1px solid #d8d4c4;
    text-align: center;
    line-height: 13px;
}

.p34 { width: 34px; }
.p112 { width: 112px; }
.p26 { width: 26px; }
.p30 { width: 30px; }
.p29 { width: 29px; }
.p33 { width: 33px; }

/* taskbar */
.taskbar {
    height: 30px;
    display: flex;
    align-items: center;
    background: linear-gradient(#1f4fc4 0, #3a7bea 2px, #2459d6 5px, #2358d4 24px, #1a46b0 100%);
    color: #fff;
}

.start {
    width: 96px;
    height: 30px;
    flex: none;
    display: flex;
    align-items: center;
    padding-left: 9px;
    border-radius: 0 12px 12px 0;
    background: linear-gradient(#3d8f3d 0, #5cb05c 3px, #3c963c 10px, #3a933a 24px, #2a6a2a 100%);
    font: italic bold 17px "Liberation Sans", sans-serif;
    text-shadow: 1px 1px 1px #1c4a1c;
}

.start svg {
    width: 20px;
    height: 20px;
    margin-right: 5px;
}

.task-list {
    display: flex;
    gap: 2px;
    margin-left: 10px;
}

.task {
    width: 158px;
    height: 24px;
    display: flex;
    align-items: center;
    gap: 4px;
    padding-left: 9px;
    border-radius: 2px;
    background: linear-gradient(#4a8cf5, #3a78ec);
    white-space: nowrap;
}

.task svg {
    width: 16px;
    height: 16px;
    flex: none;
}

.task-active {
    width: 159px;
    background: linear-gradient(#1a46a8, #1f52b8);
}

.lang {
    margin-left: auto;
    margin-right: 14px;
    padding: 0 1px;
    background-color: #3c69c4;
    line-height: 16px;
}

.tray {
    width: 200px;
    height: 30px;
    flex: none;
    display: flex;
    align-items: center;
    gap: 2px;
    padding-left: 10px;
    border-left: 1px solid #0e3fa8;
    background: linear-gradient(#0c6fd0 0, #18a5f0 2px, #1290e6 6px, #1290e6 24px, #0c6fc8 100%);
}

.tray svg {
    width: 16px;
    height: 16px;
    flex: none;
}

.clock {
    margin-left: 3px;
}
```
